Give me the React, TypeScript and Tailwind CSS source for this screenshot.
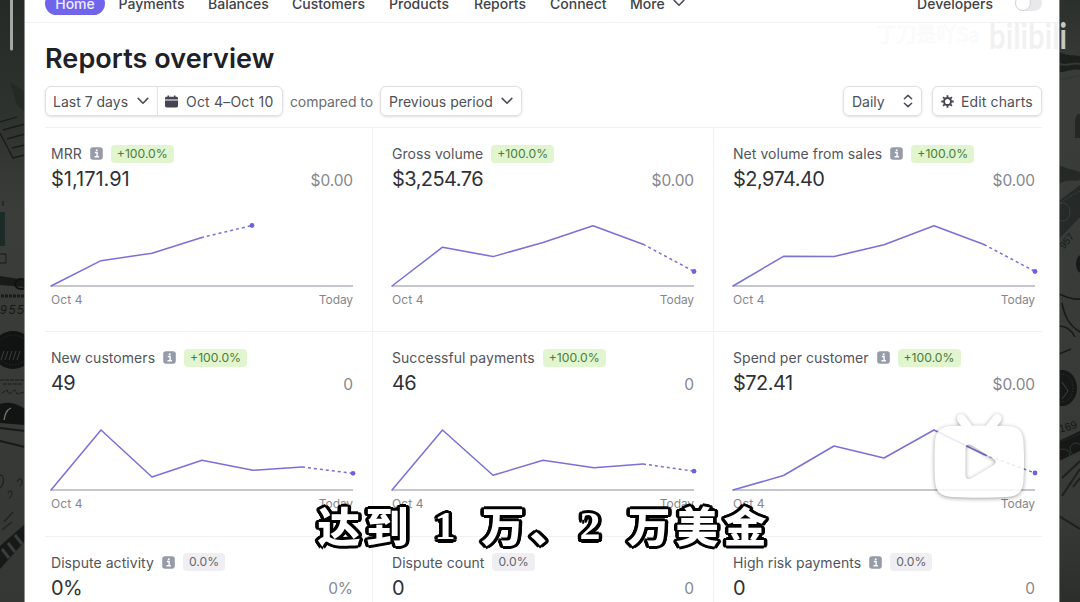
import React from "react";

type Point = [number, number];

type Report = {
  title: string;
  info?: boolean;
  change: string;
  value: string;
  previous: string;
  points?: Point[];
};

// Chart points are in pixels, y = 64 is the base line. The last one is today.
const reports: Report[] = [
  {
    title: "MRR",
    info: true,
    change: "+100.0%",
    value: "$1,171.91",
    previous: "$0.00",
    points: [[0, 64], [50, 38.7], [101, 31.2], [150, 15.7], [201, 3.5]],
  },
  {
    title: "Gross volume",
    change: "+100.0%",
    value: "$3,254.76",
    previous: "$0.00",
    points: [[0, 64], [50.5, 25.2], [101, 34.6], [151, 20.5], [201, 3.7], [251, 22.2], [302, 49.5]],
  },
  {
    title: "Net volume from sales",
    info: true,
    change: "+100.0%",
    value: "$2,974.40",
    previous: "$0.00",
    points: [[0, 64], [50.5, 34.3], [101, 34.6], [151, 22.7], [201, 3.7], [251, 22.5], [302, 49.5]],
  },
  {
    title: "New customers",
    info: true,
    change: "+100.0%",
    value: "49",
    previous: "0",
    points: [[0, 64], [50, 4], [101, 51], [151, 34.2], [202, 44.2], [251, 41], [302, 47.3]],
  },
  {
    title: "Successful payments",
    change: "+100.0%",
    value: "46",
    previous: "0",
    points: [[0, 64], [50.5, 4], [101, 49.3], [151, 34.2], [202, 41.7], [251, 38], [302, 45.2]],
  },
  {
    title: "Spend per customer",
    info: true,
    change: "+100.0%",
    value: "$72.41",
    previous: "$0.00",
    points: [[0, 64], [50.5, 49.5], [101, 20], [151, 32], [201, 4], [251, 28.5], [302, 47]],
  },
  { title: "Dispute activity", info: true, change: "0.0%", value: "0%", previous: "0%" },
  { title: "Dispute count", change: "0.0%", value: "0", previous: "0" },
  { title: "High risk payments", info: true, change: "0.0%", value: "0", previous: "0" },
];

const Chevron = () => (
  <svg width="12" height="8" viewBox="0 0 12 8" fill="none" stroke="#4c4f57" strokeWidth="1.6" strokeLinecap="round" strokeLinejoin="round">
    <path d="M1.2 1.4 6 6.3 10.8 1.4" />
  </svg>
);

const UpDown = () => (
  <svg width="10" height="14" viewBox="0 0 10 14" fill="none" stroke="#4c4f57" strokeWidth="1.5" strokeLinecap="round" strokeLinejoin="round">
    <path d="M1.4 4.8 5 1.4 8.6 4.8M1.4 9.2 5 12.6 8.6 9.2" />
  </svg>
);

const CalendarIcon = () => (
  <svg width="13" height="13" viewBox="0 0 13 13" fill="#454450">
    <path d="M0 3.6C0 2.4.7 1.8 1.6 1.8h.9V.6h1.6v1.2h4.8V.6h1.6v1.2h.9c.9 0 1.6.6 1.6 1.8v.9H0z" />
    <path d="M0 5.5h13v5.3c0 1-.7 1.7-1.7 1.7H1.7c-1 0-1.7-.7-1.7-1.7z" />
  </svg>
);

const GearIcon = () => (
  <svg width="13" height="13" viewBox="0 0 13 13" fill="none" stroke="#454450">
    <circle cx="6.5" cy="6.5" r="3.5" strokeWidth="1.9" />
    <path
      strokeWidth="1.8"
      d="M6.5.3v2.2M6.5 10.5v2.2M.3 6.5h2.2M10.5 6.5h2.2M2.1 2.1l1.6 1.6M9.3 9.3l1.6 1.6M2.1 10.9l1.6-1.6M9.3 3.7l1.6-1.6"
    />
  </svg>
);

const InfoIcon = () => (
  <svg className="ml-2" width="13" height="13" viewBox="0 0 13 13">
    <rect x=".2" y=".2" width="12.6" height="12.6" rx="2.8" fill="#969ba8" />
    <path d="M4.8 5.5h2.3v4M4.5 9.8h4.4" stroke="#fff" strokeWidth="1.4" fill="none" />
    <circle cx="6.7" cy="3.3" r="1" fill="#fff" />
  </svg>
);

const Chart = ({ points }: { points: Point[] }) => {
  const solid = points.slice(0, -1).map((p) => p.join(",")).join(" ");
  const [from, to] = points.slice(-2);
  return (
    <svg className="block overflow-visible" width="302" height="66" viewBox="0 0 302 66" fill="none">
      <line x1="0" y1="64" x2="302" y2="64" stroke="#b3b5be" strokeWidth="1.4" />
      <polyline points={solid} stroke="#7a70d6" strokeWidth="1.5" strokeLinejoin="round" strokeLinecap="round" />
      <line x1={from[0]} y1={from[1]} x2={to[0]} y2={to[1]} stroke="#7a70d6" strokeWidth="1.5" strokeDasharray="3 3" />
      <circle cx={to[0]} cy={to[1]} r="2.4" fill="#6c62dc" />
    </svg>
  );
};

const ReportCell = ({ report }: { report: Report }) => {
  const positive = report.change.startsWith("+");
  return (
    <div className="h-[204.3px] border-t border-[#f1f1f3] pt-4">
      <div className="flex h-[19px] items-center text-[14px] tracking-[0.05px] text-[#53555c]">
        <span className="whitespace-nowrap">{report.title}</span>
        {report.info && <InfoIcon />}
        <span
          className={
            positive
              ? "ml-2 h-[18px] rounded bg-[#e1f6cf] px-[6px] text-[12.2px] leading-[18px] tracking-normal text-[#4d7c3c]"
              : "ml-2 h-[18px] rounded bg-[#efeff3] px-[6px] text-[12.2px] leading-[18px] tracking-normal text-[#65676e]"
          }
        >
          {report.change}
        </span>
      </div>
      <div className="mt-[3px] flex h-[26px] w-[302px] items-center justify-between">
        <span
          className={
            report.value === "$1,171.91"
              ? "text-[20px] text-[#303137]"
              : "text-[20px] tracking-[-0.55px] text-[#303137]"
          }
        >
          {report.value}
        </span>
        <span className="pt-[3px] text-[15.5px] tracking-[-0.1px] text-[#85878e]">{report.previous}</span>
      </div>
      {report.points && (
        <div className="mt-[30px] w-[302px]">
          <Chart points={report.points} />
          <div className="mt-[4px] flex justify-between text-[12px] leading-4 text-[#85878e]">
            <span className="tracking-[0.1px]">Oct 4</span>
            <span className="tracking-[-0.1px]">Today</span>
          </div>
        </div>
      )}
    </div>
  );
};

const NavBar = () => (
  <div className="h-[23px] overflow-hidden border-b border-[#f1f1f3]">
    <div className="-mt-[8.5px] flex h-[23px] items-center pl-5 pr-[17px] text-[14px] font-medium text-[#414349]">
      <span className="flex h-[23px] w-[60px] items-center justify-center rounded-full bg-[#7065ea] text-[#eeecff]">Home</span>
      <span className="ml-[13.5px] w-[89.5px]">Payments</span>
      <span className="w-[84px]">Balances</span>
      <span className="w-[97px]">Customers</span>
      <span className="w-[85px]">Products</span>
      <span className="w-[76px]">Reports</span>
      <span className="w-[80px]">Connect</span>
      <span className="w-[42.5px]">More</span>
      <Chevron />
      <span className="ml-auto">Developers</span>
      <span className="ml-[22px] flex h-4 w-[27px] rounded-full bg-[#e9e9ec]">
        <span className="h-4 w-4 rounded-full border border-[#d3d3d8] bg-white" />
      </span>
    </div>
  </div>
);

const Toolbar = () => (
  <div className="mt-[11px] flex h-[30px] items-center text-[14px] text-[#4f5158]">
    <div className="flex h-[30px] w-[238px] items-center rounded-md border border-[#e0e0e4] shadow-sm">
      <div className="flex h-full w-[112px] items-center justify-between border-r border-[#e3e3e6] pl-[7px] pr-2">
        <span className="whitespace-nowrap">Last 7 days</span>
        <Chevron />
      </div>
      <div className="flex items-center gap-2 pl-[7px]">
        <CalendarIcon />
        <span className="whitespace-nowrap tracking-[0.2px]">Oct 4–Oct 10</span>
      </div>
    </div>
    <span className="w-[97px] whitespace-nowrap text-center tracking-[-0.05px] text-[#6b6d74]">compared to</span>
    <div className="flex h-[30px] w-[142px] items-center justify-between rounded-md border border-[#e0e0e4] pl-2 pr-[8px] shadow-sm">
      <span className="whitespace-nowrap">Previous period</span>
      <Chevron />
    </div>
    <div className="ml-auto flex h-[30px] w-[79px] items-center justify-between rounded-md border border-[#e0e0e4] px-2 shadow-sm">
      <span>Daily</span>
      <UpDown />
    </div>
    <div className="ml-[10px] flex h-[30px] w-[110px] items-center gap-[7px] rounded-md border border-[#e0e0e4] pl-2 shadow-sm">
      <GearIcon />
      <span className="whitespace-nowrap tracking-[0.13px]">Edit charts</span>
    </div>
  </div>
);

const LeftBackdrop = () => (
  <svg className="block" width="25" height="602" viewBox="0 0 25 602" fill="none">
    <defs>
      <linearGradient id="leftShade" x1="0" y1="0" x2="0" y2="1">
        <stop offset="0" stopColor="#252a27" />
        <stop offset=".22" stopColor="#30342f" />
        <stop offset=".35" stopColor="#3a3d39" />
        <stop offset="1" stopColor="#343733" />
      </linearGradient>
    </defs>
    <rect width="25" height="602" fill="url(#leftShade)" />
    <path d="M10 82 25 92v20l-8-7z" fill="#252926" />
    <path d="M0 122 17 117M3 130 25 124M7 139 25 134M12 148 25 145M0 133 13 158 25 155" stroke="#181b19" strokeWidth="1.3" />
    <path d="M0 212H5V246H0z" fill="#1b2b28" />
    <path d="M3 201v5M0 254h6v9H0" stroke="#171a18" />
    <path d="M0 276 25 280v7L0 285z" fill="#171a18" />
    <ellipse cx="21" cy="284" rx="6" ry="5" stroke="#101211" strokeWidth="2" />
    <path d="M1 296h24" stroke="#171918" strokeWidth="3" strokeDasharray="3 1" />
    <text x="0" y="314" fontSize="12" fontStyle="italic" fill="#141615" fontFamily="Liberation Sans" textLength="24">955</text>
    <ellipse cx="13" cy="350" rx="20" ry="19" fill="#111312" />
    <ellipse cx="13" cy="350" rx="16" ry="15" stroke="#353835" strokeDasharray="1 2" />
    <path d="m1 360 3-9m1 9 3-9m1 9 3-9m1 9 3-9m1 9 3-9" stroke="#3b3e3b" />
    <path d="M0 380h25M3 384h20M2 393l5-3 2 4 6-4 2 4 8-2" stroke="#191b1a" strokeDasharray="4 1" />
    <path d="M0 404c9-3 18 0 25 5v16l-25-2z" fill="#121413" />
    <path d="M11 408c-5 2-6 7-7 12" stroke="#727570" strokeWidth="1.3" />
    <path d="M0 428 25 431M0 441 25 447" stroke="#171a18" strokeWidth="2" />
    <path d="M0 475c4 0 5 9 0 13M8 493c5-7 5 4 1 5M17 482c4-7 7 0 3 4M4 522 13 512M2 530 12 522" stroke="#202321" strokeWidth="1.3" />
    <path d="M0 546 25 524v17L0 569z" fill="#171918" />
    <path d="m2 549 7 9m-1-15 7 9m0-17 7 9" stroke="#3a3d3e" strokeWidth="3" />
    <path d="M10 0h3v49a1.5 1.5 0 0 1-3 0z" fill="#a4a8a5" />
    <path d="M24.7 0v602" stroke="#a2a4a2" />
  </svg>
);

const RightBackdrop = () => (
  <svg className="block" width="21" height="602" viewBox="0 0 21 602" fill="none">
    <defs>
      <linearGradient id="rightShade" x1="0" y1="0" x2="0" y2="1">
        <stop offset="0" stopColor="#2c302d" />
        <stop offset=".13" stopColor="#393c38" />
        <stop offset=".85" stopColor="#373a36" />
        <stop offset="1" stopColor="#2b2e2b" />
      </linearGradient>
    </defs>
    <rect width="21" height="602" fill="url(#rightShade)" />
    <path d="M0 52c8 4 14 3 21 4v14c-9-2-15 3-21 2z" fill="#1c201d" />
    <path d="M0 64c8 3 13-2 21 0M0 80c8-1 14-4 21-4" stroke="#343834" strokeWidth="2" />
    <path d="M16 120c2-7 3-6 5-6v24h-5z" fill="#242825" />
    <path d="M0 165c7 4 14 4 21 7v8c-8 2-13-2-21 4z" fill="#252926" />
    <path d="M0 201 21 185v32L0 239z" fill="#252a28" />
    <ellipse cx="4" cy="212" rx="7" ry="9" stroke="#3a3e3a" />
    <path d="m1 203 9-6 11-6" stroke="#3c403d" strokeDasharray="2 1" />
    <text x="0" y="249" fontSize="10" fill="#171b18" fontFamily="Liberation Sans" transform="rotate(-50 3 244)">957</text>
    <ellipse cx="22" cy="264" rx="5" ry="9" fill="#171a18" />
    <path d="M0 294c6 2 12 6 21 5M3 303c2 10 5 21 18 29M0 326c7 0 12 3 16 11M0 354l12-5" stroke="#171a18" strokeWidth="1.6" />
    <ellipse cx="3" cy="388" rx="15" ry="18" fill="#151816" />
    <ellipse cx="3" cy="388" rx="11" ry="14" stroke="#363a37" strokeDasharray="1 2" />
    <path d="M3 382 9 391 3 399" stroke="#3e423f" />
    <text x="1" y="433" fontSize="11" fill="#141715" fontFamily="Liberation Sans" transform="rotate(-15 0 433)">169</text>
    <path d="M0 441 21 431v20L0 461z" fill="#151816" />
    <ellipse cx="4" cy="455" rx="7" ry="6" stroke="#343835" />
    <ellipse cx="17" cy="449" rx="6" ry="6" stroke="#343835" />
    <path d="m0 442 21-8M3 478l18-17M3 496l18-27M14 487l7-9M0 516l21 13" stroke="#1d201e" strokeWidth="2" />
    <path d="M.3 0v602" stroke="#969896" />
  </svg>
);

const Watermark = () => (
  <div className="absolute left-[868px] top-[15px] flex h-[38px] w-[204px] items-center">
    <span className="w-[120px] text-center font-['Noto_Sans_CJK_SC',sans-serif] text-[20px] leading-none text-white [-webkit-text-stroke:0.5px_#f6f6f7]">
      丁刀是吖Sa
    </span>
    <svg width="84" height="38" viewBox="0 0 84 38">
      <defs>
        <linearGradient id="mark" gradientUnits="userSpaceOnUse" x1="0" y1="0" x2="84" y2="0">
          <stop offset=".846" stopColor="#f1f1f2" />
          <stop offset=".846" stopColor="#c6cac7" />
        </linearGradient>
      </defs>
      <text x="1" y="34" fontSize="37" fontWeight="700" fontFamily="Lato, sans-serif" textLength="78" lengthAdjust="spacingAndGlyphs" fill="url(#mark)">
        bilibili
      </text>
    </svg>
  </div>
);

const PlayerIcon = () => (
  <svg className="absolute left-[923.5px] top-[404px]" width="112" height="108" viewBox="0 0 112 108">
    <defs>
      <mask id="play">
        <rect width="112" height="108" fill="#fff" />
        <path d="M41.5 45c0-4 2-5.5 5.5-4l22 13.5c3.500 2 3.500 5 0 7L47 74.500c-3.500 1.500-5.500 0-5.500-4z" fill="#000" />
      </mask>
    </defs>
    <g className="opacity-85">
      <g className="drop-shadow-[0_1px_2px_rgba(0,0,0,0.45)]">
        <g mask="url(#play)">
          <path d="M37.3 14.500 45 25M73.200 14.500 65 25" stroke="#fff" strokeWidth="9" strokeLinecap="round" />
          <path
            d="M28 22C17 22 11.500 27 11 38c-.7 13-.7 25 0 38C11.500 88 17 92.500 28 93c20 1 36 1 55 0 11-.5 16-5 16.500-17 .7-12 .7-25 0-38C99 27 94 22 83 22c-19-.7-36-.7-55 0z"
            fill="#fff"
          />
        </g>
      </g>
    </g>
  </svg>
);

const Caption = () => (
  <div className="absolute left-[315px] top-[492px] flex h-[64px] scale-y-95 items-center font-['Noto_Sans_CJK_SC',sans-serif] text-[43px] font-black leading-none text-white [text-shadow:3.5px_0_0_#000,-3.5px_0_0_#000,0_3.5px_0_#000,0_-3.5px_0_#000,2.5px_2.5px_0_#000,-2.5px_2.5px_0_#000,2.5px_-2.5px_0_#000,-2.5px_-2.5px_0_#000,3.2px_1.4px_0_#000,-3.2px_1.4px_0_#000,3.2px_-1.4px_0_#000,-3.2px_-1.4px_0_#000]">
    <span className="w-12 text-center">达</span>
    <span className="w-12 text-center">到</span>
    <span className="w-[68px] pt-[3px] text-center font-['Liberation_Serif',serif] text-[42px] font-bold">1</span>
    <span className="w-12 text-center">万</span>
    <span className="w-12 text-center">、</span>
    <span className="w-[50px] pr-5 pt-[3px] text-center font-['Liberation_Serif',serif] text-[42px] font-bold">2</span>
    <span className="w-12 text-center">万</span>
    <span className="w-12 text-center">美</span>
    <span className="w-12 text-center">金</span>
  </div>
);

const App = () => {
  return (
    <div className="relative flex h-[602px] w-[1080px] overflow-hidden bg-[#343733] font-['Inter',sans-serif]">
      <LeftBackdrop />
      <main className="h-[602px] w-[1034px] overflow-hidden bg-white">
        <NavBar />
        <div className="pl-5 pr-[17px]">
          <h1 className="mt-[20px] h-[32px] whitespace-nowrap text-[27px] font-semibold leading-8 tracking-[0.08px] text-[#202127]">Reports overview</h1>
          <Toolbar />
          <div className="mt-[11px] grid grid-cols-[327px_341px_329px]">
            {reports.map((report, i) => (
              <div key={report.title} className={i % 3 === 0 ? "[&>div]:pl-[6px]" : "border-l border-[#f1f1f3] [&>div]:pl-[19px]"}>
                <ReportCell report={report} />
              </div>
            ))}
          </div>
        </div>
      </main>
      <RightBackdrop />
      <Watermark />
      <PlayerIcon />
      <Caption />
    </div>
  );
};

export default App;
